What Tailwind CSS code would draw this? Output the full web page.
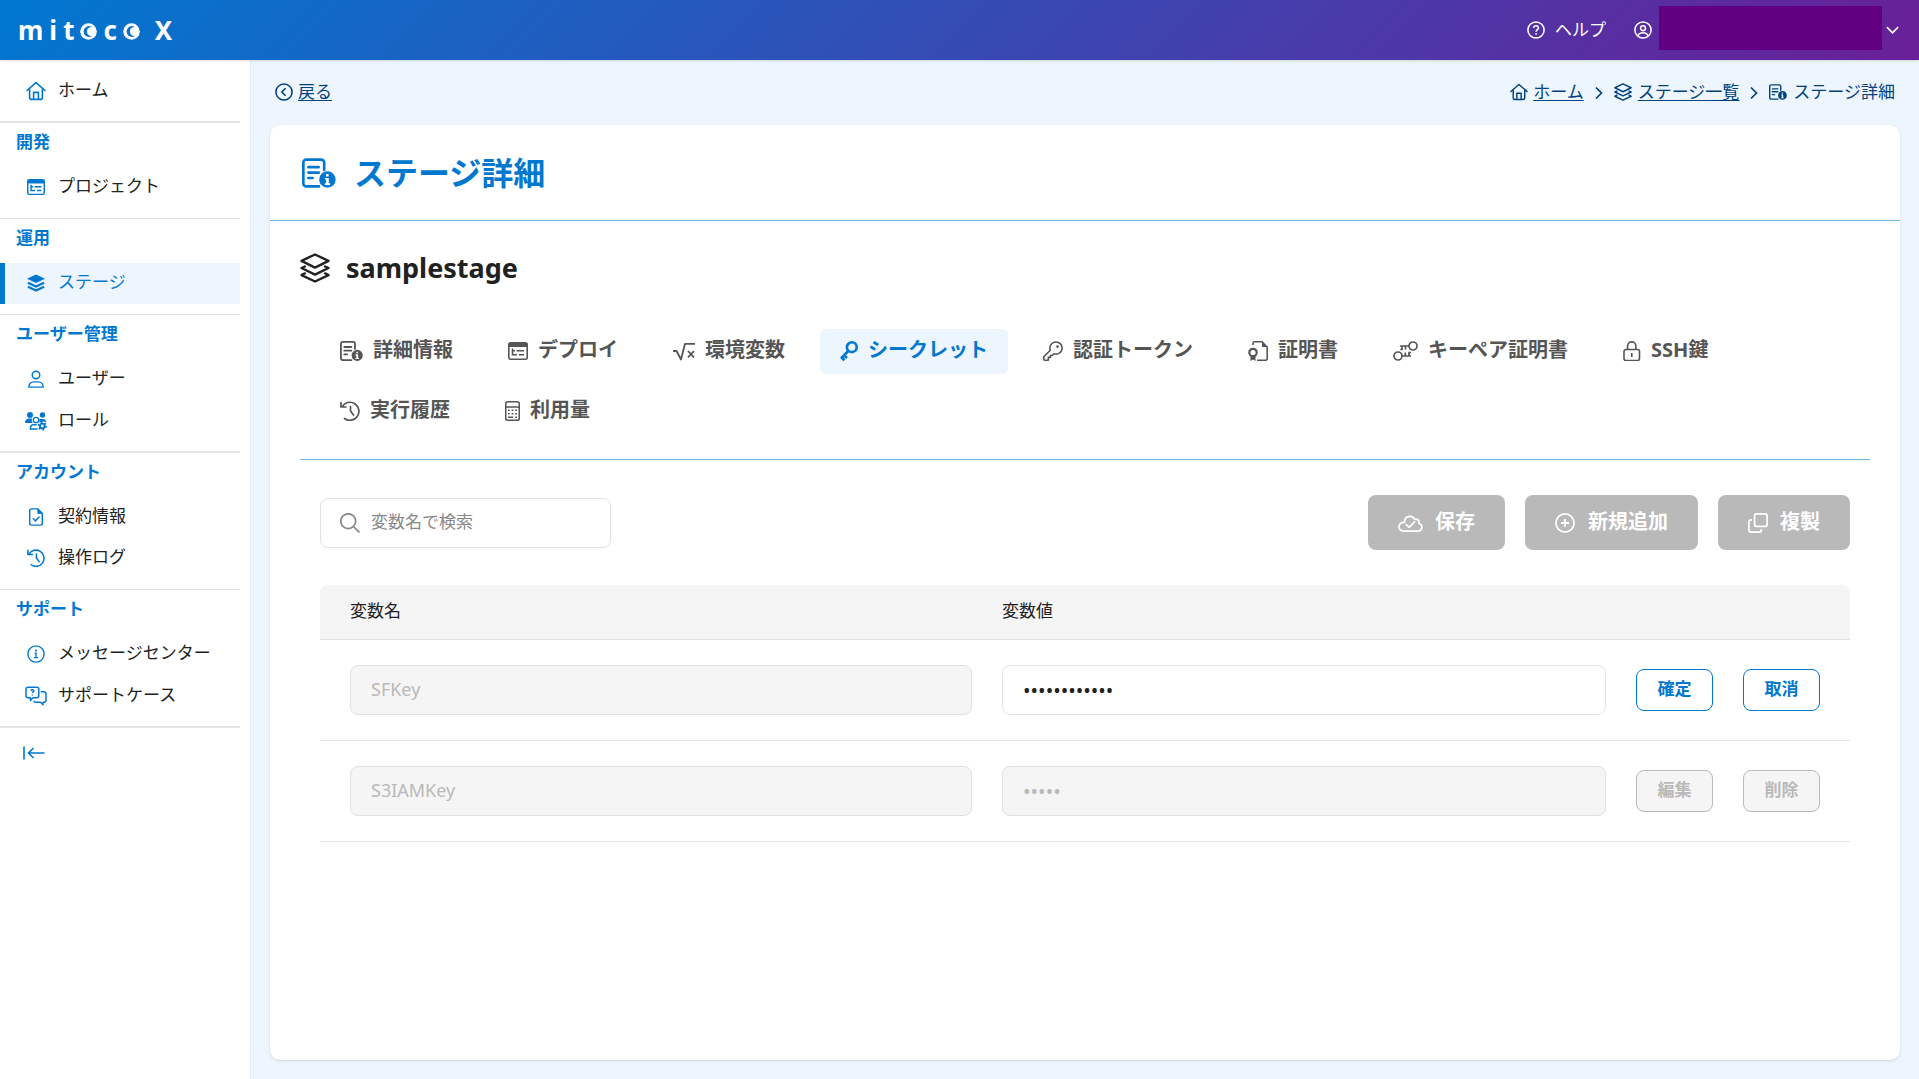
<!DOCTYPE html>
<html lang="ja">
<head>
<meta charset="utf-8">
<meta name="viewport" content="width=device-width, initial-scale=1">
<title>ステージ詳細 | mitoco X</title>
<script src="https://cdn.jsdelivr.net/npm/@tailwindcss/browser@4"></script>
</head>
<body class="flex min-h-screen flex-col bg-[#edf5ff] font-['Noto_Sans','Noto_Sans_CJK_JP',sans-serif] text-[17px] leading-6 text-[#212121]">

<svg class="hidden" aria-hidden="true">
  <symbol id="home" viewBox="0 0 20 20"><path d="M1 9.5 10 1.600l9 7.900M3.600 7.600V16.400a2 2 0 0 0 2 2h8.800a2 2 0 0 0 2-2V7.600M7.600 18v-6.600h4.800V18" fill="none" stroke="currentColor" stroke-width="1.600" stroke-linejoin="round" stroke-linecap="round"/></symbol>
  <symbol id="window" viewBox="0 0 20 20"><path d="M2.500 1h15A2.500 2.500 0 0 1 20 3.500v13a2.500 2.500 0 0 1-2.500 2.500h-15A2.500 2.500 0 0 1 0 16.500v-13A2.500 2.500 0 0 1 2.500 1zM1.600 6v10.500a1 1 0 0 0 1 1h14.800a1 1 0 0 0 1-1V6z" fill="currentColor" fill-rule="evenodd"/><path d="M4.500 7.500v6.300H9M4.500 9.800H7M8.500 9.800H16M11 13.800h5" fill="none" stroke="currentColor" stroke-width="1.600"/></symbol>
  <symbol id="layers" viewBox="0 0 20 20"><path d="M10 1 19 5.300 10 9.700 1 5.300zM3.200 9 1 10l9 4.400 9-4.400-2.200-1M3.200 13.600 1 14.700 10 19l9-4.300-2.200-1.100" fill="none" stroke="currentColor" stroke-width="1.600" stroke-linejoin="round" stroke-linecap="round"/></symbol>
  <symbol id="layers-fill" viewBox="0 0 20 20"><path d="M10 .5 20 5.200 10 10 0 5.200z" fill="currentColor"/><path d="m1 9.800 9 4.200 9-4.200M1 14.200l9 4.200 9-4.200" fill="none" stroke="currentColor" stroke-width="2.500" stroke-linejoin="round"/></symbol>
  <symbol id="user" viewBox="0 0 20 20"><circle cx="10" cy="5.500" r="4.200" fill="none" stroke="currentColor" stroke-width="1.600"/><path d="M2 19c0-3.500 2.500-5.800 5.500-5.800h5c3 0 5.500 2.300 5.500 5.800z" fill="none" stroke="currentColor" stroke-width="1.600" stroke-linejoin="round"/></symbol>
  <symbol id="roles" viewBox="0 0 22 20"><circle cx="5" cy="4" r="3" fill="currentColor"/><circle cx="17.500" cy="4" r="2.700" fill="currentColor"/><path d="M0 12c0-3 1.500-4.500 4-4.500h3a5 5 0 0 0 .7 4.500zM14.300 8H18c2 0 3 1 3.500 3l-2.500-.6-4.600 1z" fill="currentColor"/><g fill="none" stroke="currentColor"><circle cx="11" cy="9" r="2.700" stroke-width="1.300"/><path d="M12.500 18H5.300c0-3 1.500-4.200 3.200-4.200h3.200" stroke-width="1.400"/><circle cx="17.300" cy="15" r="2.400" stroke-width="1.900"/><circle cx="17.300" cy="15" r="3.900" stroke-width="1.400" stroke-dasharray="2 2.080"/></g></symbol>
  <symbol id="file-check" viewBox="0 0 20 20"><path d="M12 1H5a2 2 0 0 0-2 2v14a2 2 0 0 0 2 2h10a2 2 0 0 0 2-2V6z" fill="none" stroke="currentColor" stroke-width="1.600"/><path d="m12 1 5 5h-5z" fill="currentColor" stroke="currentColor" stroke-linejoin="round"/><path d="m7 12 2.300 2.300L13.500 10" fill="none" stroke="currentColor" stroke-width="1.600" stroke-linecap="round"/></symbol>
  <symbol id="history" viewBox="0 0 20 20"><path d="M2.200 5.600A9 9 0 1 1 4.500 17.500M1 1.500V6h5M10.500 5.500V10l3 4" fill="none" stroke="currentColor" stroke-width="1.700" stroke-linecap="round" stroke-linejoin="round"/></symbol>
  <symbol id="info" viewBox="0 0 20 20"><circle cx="10" cy="10" r="9" fill="none" stroke="currentColor" stroke-width="1.500"/><circle cx="10" cy="6.200" r="1.200" fill="currentColor"/><path d="M8.200 9H10v5M7.700 14h4.600" fill="none" stroke="currentColor" stroke-width="1.600"/></symbol>
  <symbol id="chat" viewBox="0 0 22 20"><path d="M3 1.200h8.800a2 2 0 0 1 2 2v6.600a2 2 0 0 1-2 2H8l-2.600 2.600v-2.600H3a2 2 0 0 1-2-2V3.200a2 2 0 0 1 2-2zM15.800 5.700H19a2 2 0 0 1 2 2v6.600a2 2 0 0 1-2 2h-1v2.400l-2.500-2.400h-5a1.800 1.800 0 0 1-1.700-1.500M5.800 4.700c.4-1.300 3-1.300 3 .2 0 1-1.400 1-1.400 2.200M7.300 8.600v1" fill="none" stroke="currentColor" stroke-width="1.500" stroke-linejoin="round"/></symbol>
  <symbol id="collapse" viewBox="0 0 22 14"><path d="M1 .5v13M21.500 7H6M10.500 2 5.500 7l5 5" fill="none" stroke="currentColor" stroke-width="1.600"/></symbol>
  <symbol id="help" viewBox="0 0 20 20"><circle cx="10" cy="10" r="9" fill="none" stroke="currentColor" stroke-width="1.700"/><path d="M7.300 7.700c.3-3.200 5.400-3 5.400 0 0 2-2.600 2-2.600 4.200" fill="none" stroke="currentColor" stroke-width="1.700"/><circle cx="10.100" cy="14.300" r="1.100" fill="currentColor"/></symbol>
  <symbol id="account" viewBox="0 0 20 20"><g fill="none" stroke="currentColor" stroke-width="1.700"><circle cx="10" cy="10" r="9"/><circle cx="10" cy="8" r="2.700"/><path d="M4.500 16.500c.7-3 2.500-3.500 5.500-3.500s4.800.5 5.500 3.500"/></g></symbol>
  <symbol id="back" viewBox="0 0 20 20"><circle cx="10" cy="10" r="9" fill="none" stroke="currentColor" stroke-width="1.700"/><path d="m11.800 5.800-4.200 4.200 4.200 4.200" fill="none" stroke="currentColor" stroke-width="1.800"/></symbol>
  <symbol id="chevron" viewBox="0 0 8 14"><path d="m1 1.500 5.500 5.500L1 12.500" fill="none" stroke="currentColor" stroke-width="1.700"/></symbol>
  <symbol id="detail" viewBox="0 0 23 20"><path d="M11.500 19.100H2.900a2 2 0 0 1-2-2V2.900a2 2 0 0 1 2-2H13a2 2 0 0 1 2 2v5M4.300 6h7M4.300 9.700h7M4.300 13.400h2.900" fill="none" stroke="currentColor" stroke-width="1.800" stroke-linecap="round"/><path fill-rule="evenodd" fill="currentColor" d="M17.200 8.800a5.600 5.600 0 1 1 0 11.200 5.600 5.600 0 0 1 0-11.200zM16.300 10.700v1.600h1.700v-1.600zM15.500 13.300v1.100h.8v2.600h-.9v1.100h3.600V17h-.9v-3.700z"/></symbol>
  <symbol id="sqrt" viewBox="0 0 22 20"><path d="M0 10h3.500L8 18.500 12 2.800H22M15 10l6 6.400M21 10l-6 6.400" fill="none" stroke="currentColor" stroke-width="1.800" stroke-linejoin="round"/></symbol>
  <symbol id="key-fill" viewBox="0 0 18 20"><circle cx="11.800" cy="6.200" r="4.900" fill="none" stroke="currentColor" stroke-width="2.600"/><path d="M8.200 10 1.500 17M1 16 4.500 19.300M3.700 14 7 17" fill="none" stroke="currentColor" stroke-width="2.600"/></symbol>
  <symbol id="key" viewBox="0 0 20 20"><path d="M7.300 9.200A6.100 6.100 0 1 1 11 12.800L9.300 14.500H7.400v1.900H5.300v2.800H1.700a.9.900 0 0 1-.9-.9v-2.600z" fill="none" stroke="currentColor" stroke-width="1.600" stroke-linejoin="round"/><circle cx="14.500" cy="5.600" r="1.300" fill="currentColor"/></symbol>
  <symbol id="cert" viewBox="0 0 20 20"><path d="M5 4V2.500A1.800 1.800 0 0 1 6.800.8H14L19.200 6v11.500a1.800 1.800 0 0 1-1.800 1.800H9" fill="none" stroke="currentColor" stroke-width="1.600"/><path d="m14 .8 5.200 5.200H14zM2.500 14.500h5V20L5 18.500 2.500 20z" fill="currentColor"/><circle cx="5" cy="11.500" r="3.700" fill="none" stroke="currentColor" stroke-width="2.200"/></symbol>
  <symbol id="keypair" viewBox="0 0 25 20"><g fill="none" stroke="currentColor" stroke-width="1.700"><circle cx="5" cy="15" r="4"/><circle cx="20" cy="5" r="4"/><path d="M9 15h9M12.300 15v-3.500M16 15v-3.500h1.800M16 5H7M12.500 5v3.500M9 5v3.500H7.300"/></g></symbol>
  <symbol id="lock" viewBox="0 0 18 20"><path d="M3 8.500h11.500a2 2 0 0 1 2 2v7a2 2 0 0 1-2 2H3a2 2 0 0 1-2-2v-7a2 2 0 0 1 2-2zM4.600 8.500V5a4.100 4.100 0 0 1 8.300 0v3.500M8.800 12v4" fill="none" stroke="currentColor" stroke-width="1.600"/></symbol>
  <symbol id="calc" viewBox="0 0 15 20"><path d="M2.700.8h9.600a2 2 0 0 1 2 2v14.400a2 2 0 0 1-2 2H2.700a2 2 0 0 1-2-2V2.800a2 2 0 0 1 2-2zM.7 6h13.600" fill="none" stroke="currentColor" stroke-width="1.600"/><path d="M3 9.300h1.700M6.600 9.300h1.700M10.200 9.300h1.700M3 12.800h1.700M6.600 12.800h1.700M10.200 12.800h1.700M3 16.200h5.200M10.200 16.200h1.700" stroke="currentColor" stroke-width="1.600"/></symbol>
  <symbol id="search" viewBox="0 0 20 20"><circle cx="8.200" cy="8.200" r="7.400" fill="none" stroke="currentColor" stroke-width="1.700"/><path d="m13.500 13.500 6 6" stroke="currentColor" stroke-width="1.700"/></symbol>
  <symbol id="cloud" viewBox="0 0 25 20"><path d="M5.300 18.200h14.900a4 4 0 0 0 .8-7.800c.8-2.900-2-4.900-4.300-4-2.500-5.200-11-3.300-10.100 3.100C.6 9-1.500 16.500 5.300 18.200zM8.300 11.700l2.700 2.700 5.600-5.600" fill="none" stroke="currentColor" stroke-width="1.700" stroke-linejoin="round" stroke-linecap="round"/></symbol>
  <symbol id="plus" viewBox="0 0 20 20"><circle cx="10" cy="10" r="9.100" fill="none" stroke="currentColor" stroke-width="1.700"/><path d="M10 6v8M6 10h8" stroke="currentColor" stroke-width="1.800"/></symbol>
  <symbol id="copy" viewBox="0 0 20 20"><path d="M8.600.9h8.500a2 2 0 0 1 2 2v8.500a2 2 0 0 1-2 2H8.600a2 2 0 0 1-2-2V2.900a2 2 0 0 1 2-2zM4 6.900H2.900a2 2 0 0 0-2 2v8.200a2 2 0 0 0 2 2h8.400a2 2 0 0 0 2-2V16" fill="none" stroke="currentColor" stroke-width="1.700"/></symbol>
  <symbol id="eye" viewBox="0 0 17 17"><circle cx="8.500" cy="8.500" r="8.300" fill="#fff"/><circle cx="9" cy="8.500" r="5.400" fill="#0a70cb"/><circle cx="11.500" cy="8.500" r="4.600" fill="#fff"/></symbol>
</svg>

<header class="relative z-10 flex h-15 items-center justify-between bg-linear-135/srgb from-[#0078d0] to-[#6a1f98] pr-5 pl-[18px] text-white shadow">
  <a href="#" class="flex items-baseline gap-[6px] text-[26px] leading-8 font-bold" aria-label="mitoco X">
    <span>m</span><span>i</span><span>t</span>
    <svg class="size-[17px]"><use href="#eye"/></svg>
    <span>c</span>
    <svg class="size-[17px]"><use href="#eye"/></svg>
    <span class="pl-[9px]">X</span>
  </a>
  <div class="flex items-center gap-7">
    <a href="#" class="flex items-center gap-[10px]"><svg class="size-[18px]"><use href="#help"/></svg><span>ヘルプ</span></a>
    <button type="button" class="flex items-center" aria-label="アカウントメニュー">
      <svg class="size-[18px]"><use href="#account"/></svg>
      <span class="mb-1 ml-[7px] h-11 w-[223px] bg-[#610080]"></span>
      <svg class="ml-1 h-2 w-[13px]" viewBox="0 0 14 8"><path d="m1 1 6 6 6-6" fill="none" stroke="currentColor" stroke-width="1.800"/></svg>
    </button>
  </div>
</header>

<div class="flex flex-1">
  <nav class="w-[251px] shrink-0 border-r border-[#e4edf6] bg-white pt-[10px] pr-[10px]" aria-label="メインメニュー">
    <div class="pb-[10px]">
      <a href="#" class="flex h-[41px] items-center gap-3 pl-[26px]"><svg class="size-5 text-[#0078d0]"><use href="#home"/></svg><span class="pb-[2px]">ホーム</span></a>
    </div>
    <section class="border-t-2 border-[#e5e5e5] pb-[10px]">
      <h2 class="h-11 pt-[7px] pl-4 font-bold text-[#0078d0]">開発</h2>
      <a href="#" class="flex h-[41px] items-center gap-3 pb-[2px] pl-[26px]"><span class="flex w-5 justify-center"><svg class="size-[18px] text-[#0078d0]"><use href="#window"/></svg></span><span class="pb-[2px]">プロジェクト</span></a>
    </section>
    <section class="border-t border-[#e5e5e5] pb-[10px]">
      <h2 class="h-11 pt-[7px] pl-4 font-bold text-[#0078d0]">運用</h2>
      <a href="#" class="flex h-[41px] items-center gap-3 border-l-5 border-[#0078d0] bg-[#edf5ff] pb-[2px] pl-[21px] text-[#0078d0]" aria-current="page"><span class="flex w-5 justify-center"><svg class="size-[18px]"><use href="#layers-fill"/></svg></span><span class="pb-[2px]">ステージ</span></a>
    </section>
    <section class="border-t border-[#e5e5e5] pb-[10px]">
      <h2 class="h-11 pt-[7px] pl-4 font-bold text-[#0078d0]">ユーザー管理</h2>
      <a href="#" class="flex h-[41px] items-center gap-3 pb-[2px] pl-[26px]"><span class="flex w-5 justify-center"><svg class="size-[18px] text-[#0078d0]"><use href="#user"/></svg></span><span class="pb-[2px]">ユーザー</span></a>
      <a href="#" class="flex h-[41px] items-center gap-[11px] pl-[25px]"><svg class="h-5 w-[22px] text-[#0078d0]"><use href="#roles"/></svg><span class="pb-[2px]">ロール</span></a>
    </section>
    <section class="border-t-2 border-[#e5e5e5] pb-[10px]">
      <h2 class="h-11 pt-[7px] pl-4 font-bold text-[#0078d0]">アカウント</h2>
      <a href="#" class="flex h-[41px] items-center gap-3 pb-[2px] pl-[26px]"><span class="flex w-5 justify-center"><svg class="size-[18px] text-[#0078d0]"><use href="#file-check"/></svg></span><span class="pb-[2px]">契約情報</span></a>
      <a href="#" class="flex h-[41px] items-center gap-3 pb-[2px] pl-[26px]"><span class="flex w-5 justify-center"><svg class="size-[18px] text-[#0078d0]"><use href="#history"/></svg></span><span class="pb-[2px]">操作ログ</span></a>
    </section>
    <section class="border-t border-[#e5e5e5] pb-[10px]">
      <h2 class="h-11 pt-[7px] pl-4 font-bold text-[#0078d0]">サポート</h2>
      <a href="#" class="flex h-[41px] items-center gap-3 pb-[2px] pl-[26px]"><span class="flex w-5 justify-center"><svg class="size-[18px] text-[#0078d0]"><use href="#info"/></svg></span><span class="pb-[2px]">メッセージセンター</span></a>
      <a href="#" class="flex h-[41px] items-center gap-[11px] pl-[25px]"><svg class="h-5 w-[22px] text-[#0078d0]"><use href="#chat"/></svg><span class="pb-[2px]">サポートケース</span></a>
    </section>
    <div class="border-t-2 border-[#e5e5e5] pt-[18px] pl-[23px]">
      <button type="button" class="block text-[#0078d0]" aria-label="メニューを閉じる"><svg class="h-[14px] w-[22px]"><use href="#collapse"/></svg></button>
    </div>
  </nav>

  <main class="flex min-w-0 flex-1 flex-col pr-[19px] pb-[19px] pl-[19px]">
    <div class="flex h-[65px] items-center justify-between px-[5px] pb-[2px] text-[#00417f]">
      <a href="#" class="flex items-center gap-[5px]"><svg class="size-[18px]"><use href="#back"/></svg><span class="underline underline-offset-2">戻る</span></a>
      <nav class="flex items-center gap-[11px]" aria-label="パンくずリスト">
        <a href="#" class="flex items-center gap-[5px]"><svg class="size-[18px]"><use href="#home"/></svg><span class="underline underline-offset-2">ホーム</span></a>
        <svg class="mt-[2px] h-[14px] w-2"><use href="#chevron"/></svg>
        <a href="#" class="flex items-center gap-[6px]"><svg class="size-[18px]"><use href="#layers"/></svg><span class="underline underline-offset-2">ステージ一覧</span></a>
        <svg class="mt-[2px] h-[14px] w-2"><use href="#chevron"/></svg>
        <span class="flex items-center gap-[6px]"><svg class="size-[18px]"><use href="#detail"/></svg>ステージ詳細</span>
      </nav>
    </div>

    <div class="flex-1 rounded-[10px] bg-white shadow">
      <div class="flex h-24 items-center gap-[18px] border-b border-[#76b5e0] pl-8 text-[#0078d0]">
        <svg class="h-[30px] w-[34px]"><use href="#detail"/></svg>
        <h1 class="text-[32px] leading-10 font-bold">ステージ詳細</h1>
      </div>

      <div class="px-[30px] pt-[27px]">
        <div class="flex items-center gap-4">
          <svg class="size-[30px]"><use href="#layers"/></svg>
          <h2 class="text-[27px] leading-10 font-bold">samplestage</h2>
        </div>

        <div class="mt-[41px] flex flex-wrap gap-[15px] border-b border-[#76b5e0] px-5 pb-[25px] text-[20px] font-bold text-[#555]" role="tablist">
          <button type="button" role="tab" class="flex h-[45px] items-center gap-[10px] rounded-md px-5 pb-[2px]"><svg class="h-5 w-[23px]"><use href="#detail"/></svg><span class="pb-[2px]">詳細情報</span></button>
          <button type="button" role="tab" class="flex h-[45px] items-center gap-[10px] rounded-md px-5 pb-[2px]"><svg class="size-5"><use href="#window"/></svg><span class="pb-[2px]">デプロイ</span></button>
          <button type="button" role="tab" class="flex h-[45px] items-center gap-[10px] rounded-md px-5 pb-[2px]"><svg class="h-5 w-[22px]"><use href="#sqrt"/></svg><span class="pb-[2px]">環境変数</span></button>
          <button type="button" role="tab" aria-selected="true" class="flex h-[45px] items-center gap-[10px] rounded-md bg-[#edf5ff] px-5 pb-[2px] text-[#0078d0]"><svg class="h-5 w-[18px]"><use href="#key-fill"/></svg><span class="pb-[2px]">シークレット</span></button>
          <button type="button" role="tab" class="flex h-[45px] items-center gap-[10px] rounded-md px-5 pb-[2px]"><svg class="size-5"><use href="#key"/></svg><span class="pb-[2px]">認証トークン</span></button>
          <button type="button" role="tab" class="flex h-[45px] items-center gap-[10px] rounded-md px-5 pb-[2px]"><svg class="size-5"><use href="#cert"/></svg><span class="pb-[2px]">証明書</span></button>
          <button type="button" role="tab" class="flex h-[45px] items-center gap-[10px] rounded-md px-5 pb-[2px]"><svg class="h-5 w-[25px]"><use href="#keypair"/></svg><span class="pb-[2px]">キーペア証明書</span></button>
          <button type="button" role="tab" class="flex h-[45px] items-center gap-[10px] rounded-md px-5 pb-[2px]"><svg class="h-5 w-[18px]"><use href="#lock"/></svg><span class="pb-[2px]">SSH鍵</span></button>
          <button type="button" role="tab" class="flex h-[45px] items-center gap-[10px] rounded-md px-5 pb-[2px]"><svg class="size-5"><use href="#history"/></svg><span class="pb-[2px]">実行履歴</span></button>
          <button type="button" role="tab" class="flex h-[45px] items-center gap-[10px] rounded-md px-5 pb-[2px]"><svg class="h-5 w-[15px]"><use href="#calc"/></svg><span class="pb-[2px]">利用量</span></button>
        </div>

        <div class="px-5 pt-[35px]">
          <div class="flex items-center justify-between">
            <label class="flex h-[50px] w-[291px] items-center gap-[11px] rounded-lg border border-[#e3e3e3] px-[19px] text-[#888]">
              <svg class="size-5 shrink-0"><use href="#search"/></svg>
              <input type="text" placeholder="変数名で検索" aria-label="変数名で検索" class="w-full min-w-0 pb-[2px] outline-none placeholder:text-[#888]">
            </label>
            <div class="flex gap-5 text-[20px] font-bold text-white">
              <button type="button" disabled class="flex h-[55px] items-center gap-3 rounded-lg bg-[#b9b9b9] px-[30px]"><svg class="h-5 w-[25px]"><use href="#cloud"/></svg><span class="pb-[2px]">保存</span></button>
              <button type="button" disabled class="flex h-[55px] items-center gap-[13px] rounded-lg bg-[#b9b9b9] px-[30px]"><svg class="size-5"><use href="#plus"/></svg><span class="pb-[2px]">新規追加</span></button>
              <button type="button" disabled class="flex h-[55px] items-center gap-3 rounded-lg bg-[#b9b9b9] px-[30px]"><svg class="size-5"><use href="#copy"/></svg><span class="pb-[2px]">複製</span></button>
            </div>
          </div>

          <table class="mt-[35px] w-full table-fixed border-separate border-spacing-0 text-left">
            <thead>
              <tr class="h-[55px]">
                <th scope="col" class="w-[43.6%] rounded-tl-lg border-b border-[#e0e0e0] bg-[#f5f5f5] pr-[15px] pb-[2px] pl-[30px] font-normal">変数名</th>
                <th scope="col" class="border-b border-[#e0e0e0] bg-[#f5f5f5] px-[15px] pb-[2px] font-normal">変数値</th>
                <td class="w-[229px] rounded-tr-lg border-b border-[#e0e0e0] bg-[#f5f5f5]"></td>
              </tr>
            </thead>
            <tbody>
              <tr class="h-[101px]">
                <td class="border-b border-[#e5e5e5] pr-[15px] pl-[30px]"><input type="text" value="SFKey" disabled aria-label="変数名" class="block h-[50px] w-full rounded-lg border border-[#e0e0e0] bg-[#f5f5f5] px-5 pb-[2px] text-[18px] text-[#b9b9b9]"></td>
                <td class="border-b border-[#e5e5e5] px-[15px]"><input type="password" value="secretvalue1" aria-label="変数値" class="block h-[50px] w-full rounded-lg border border-[#e5e5e5] bg-white px-5 text-[20px]"></td>
                <td class="border-b border-[#e5e5e5] pr-[30px] pl-[15px]">
                  <div class="flex justify-between font-bold text-[#0078d0]">
                    <button type="button" class="h-[42px] w-[77px] rounded-lg border border-[#0078d0] pb-[2px]">確定</button>
                    <button type="button" class="h-[42px] w-[77px] rounded-lg border border-[#0078d0] pb-[2px]">取消</button>
                  </div>
                </td>
              </tr>
              <tr class="h-[101px]">
                <td class="border-b border-[#e5e5e5] pr-[15px] pl-[30px]"><input type="text" value="S3IAMKey" disabled aria-label="変数名" class="block h-[50px] w-full rounded-lg border border-[#e0e0e0] bg-[#f5f5f5] px-5 pb-[2px] text-[18px] text-[#b9b9b9]"></td>
                <td class="border-b border-[#e5e5e5] px-[15px]"><input type="password" value="iamid" disabled aria-label="変数値" class="block h-[50px] w-full rounded-lg border border-[#e0e0e0] bg-[#f5f5f5] px-5 text-[20px] text-[#b9b9b9]"></td>
                <td class="border-b border-[#e5e5e5] pr-[30px] pl-[15px]">
                  <div class="flex justify-between font-bold text-[#b9b9b9]">
                    <button type="button" disabled class="h-[42px] w-[77px] rounded-lg border border-[#b9b9b9] bg-[#f5f5f5] pb-[2px]">編集</button>
                    <button type="button" disabled class="h-[42px] w-[77px] rounded-lg border border-[#b9b9b9] bg-[#f5f5f5] pb-[2px]">削除</button>
                  </div>
                </td>
              </tr>
            </tbody>
          </table>
        </div>
      </div>
    </div>
  </main>
</div>
</body>
</html>
